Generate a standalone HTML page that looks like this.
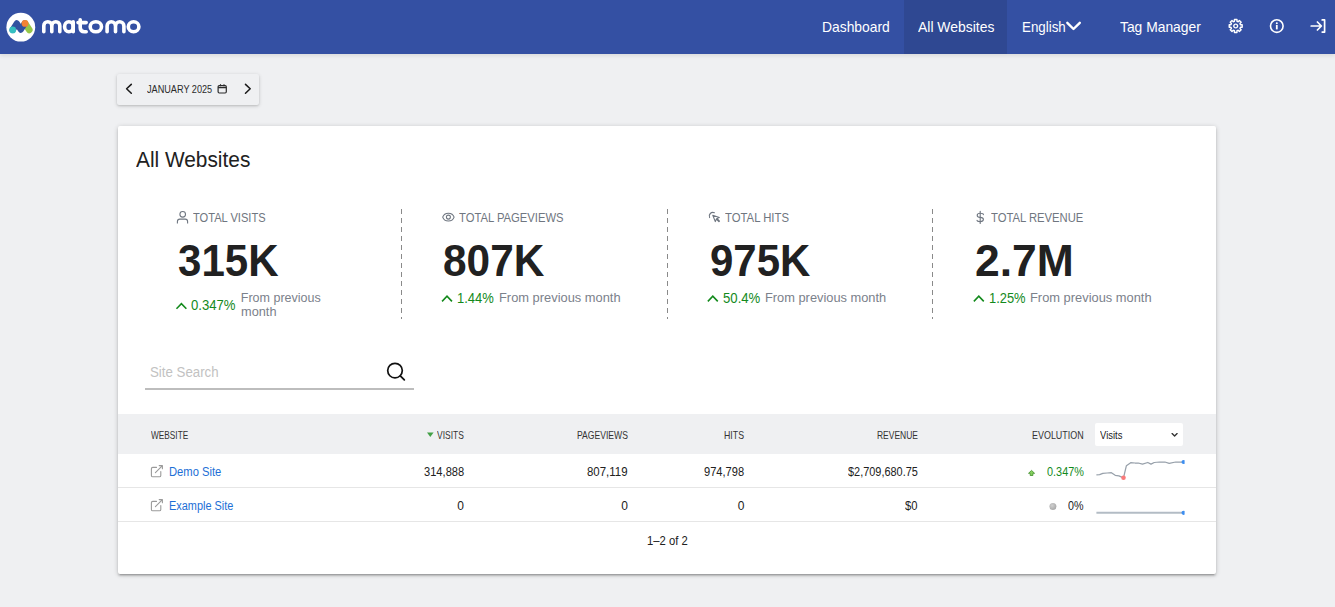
<!DOCTYPE html>
<html><head><meta charset="utf-8">
<style>
html,body{margin:0;padding:0;}
body{width:1335px;height:607px;overflow:hidden;position:relative;background:#eff0f2;font-family:"Liberation Sans",sans-serif;}
.t{position:absolute;white-space:nowrap;line-height:1;transform-origin:0 0;}
.abs{position:absolute;}
svg{position:absolute;overflow:visible;}
</style></head><body>
<!-- header -->
<div class="abs" style="left:0;top:0;width:1335px;height:54px;background:#3450a3;box-shadow:0 2px 4px 0 rgba(0,0,0,.09);"></div>
<div class="abs" style="left:904px;top:0;width:103px;height:54px;background:#2f4892;"></div>
<svg style="left:0;top:0" width="150" height="54" viewBox="0 0 150 54">
  <circle cx="20.8" cy="27.2" r="14.4" fill="#fff"/>
  <line x1="25.2" y1="23.6" x2="29.3" y2="29.9" stroke="#95c748" stroke-width="6.6" stroke-linecap="round"/>
  <polyline points="12.7,29.9 16.8,23.3 20.8,29.7 24.6,23.6" fill="none" stroke="#3152a0" stroke-width="6.2" stroke-linecap="round" stroke-linejoin="round"/>
  <circle cx="12.7" cy="29.9" r="3.4" fill="#35bfc0"/>
  <circle cx="25" cy="23.4" r="3.4" fill="#f38334"/>
  <g fill="none" stroke="#fff" stroke-width="3.6" stroke-linecap="round" stroke-linejoin="round">
    <path d="M43.8,31.8 V25.7 A4.0,4.0 0 0 1 51.8,25.7 V31.8 M51.8,25.7 A4.0,4.0 0 0 1 59.8,25.7 V31.8"/>
    <ellipse cx="68.9" cy="26.75" rx="4.3" ry="5.05"/>
    <path d="M73.2,21.7 V31.8"/>
    <path d="M80.2,19.7 V27.6 Q80.2,31.8 84.4,31.8 H86.2 M78.0,22.6 H86.2"/>
    <ellipse cx="95.85" cy="26.75" rx="5.65" ry="5.05"/>
    <path d="M107.1,31.8 V25.9 A4.2,4.2 0 0 1 115.5,25.9 V31.8 M115.5,25.9 A4.2,4.2 0 0 1 123.9,25.9 V31.8"/>
    <ellipse cx="133.6" cy="26.75" rx="5.3" ry="5.05"/>
  </g>
</svg>
<!-- English chevron -->
<svg style="left:1064px;top:18px" width="20" height="16" viewBox="1064 18 20 16">
  <polyline points="1067.3,22.8 1073.5,29 1079.8,22.8" fill="none" stroke="#fff" stroke-width="2.4" stroke-linecap="round" stroke-linejoin="round"/>
</svg>
<!-- gear -->
<svg style="left:1226px;top:17px" width="20" height="20" viewBox="1226 17 20 20">
  <g transform="translate(1235.7,26)" fill="none" stroke="#fff" stroke-width="1.4" stroke-linejoin="round">
    <path d="M4.53,-1.88 L4.73,-1.27 L6.48,-1.26 L6.48,1.26 L4.73,1.27 L4.53,1.88 L4.24,2.45 L5.47,3.69 L3.69,5.47 L2.45,4.24 L1.88,4.53 L1.27,4.73 L1.26,6.48 L-1.26,6.48 L-1.27,4.73 L-1.88,4.53 L-2.45,4.24 L-3.69,5.47 L-5.47,3.69 L-4.24,2.45 L-4.53,1.88 L-4.73,1.27 L-6.48,1.26 L-6.48,-1.26 L-4.73,-1.27 L-4.53,-1.88 L-4.24,-2.45 L-5.47,-3.69 L-3.69,-5.47 L-2.45,-4.24 L-1.88,-4.53 L-1.27,-4.73 L-1.26,-6.48 L1.26,-6.48 L1.27,-4.73 L1.88,-4.53 L2.45,-4.24 L3.69,-5.47 L5.47,-3.69 L4.24,-2.45 Z"/>
    <circle cx="0" cy="0" r="1.9"/>
  </g>
</svg>
<!-- info -->
<svg style="left:1266px;top:16px" width="22" height="22" viewBox="1266 16 22 22">
  <circle cx="1276.8" cy="26.1" r="6.3" fill="none" stroke="#fff" stroke-width="1.6"/>
  <circle cx="1276.8" cy="23.2" r="1.0" fill="#fff"/>
  <line x1="1276.8" y1="25" x2="1276.8" y2="29.4" stroke="#fff" stroke-width="1.8"/>
</svg>
<!-- logout -->
<svg style="left:1308px;top:16px" width="22" height="22" viewBox="1308 16 22 22">
  <g fill="none" stroke="#fff" stroke-width="1.7" stroke-linecap="round" stroke-linejoin="round">
    <path d="M1311.2,26 H1321.2 M1317.4,22 L1321.4,26 L1317.4,30"/>
    <path d="M1322.2,19.9 H1324.6 V32.1 H1322.2"/>
  </g>
</svg>
<!-- date selector -->
<div class="abs" style="left:117px;top:74px;width:142px;height:31px;background:#eff0f2;border-radius:2px;box-shadow:0 1px 2px 0 rgba(0,0,0,.12),0 1px 4px 0 rgba(0,0,0,.14);"></div>
<svg style="left:117px;top:74px" width="142" height="31" viewBox="117 74 142 31">
  <polyline points="131.3,84.4 126.6,88.8 131.3,93.2" fill="none" stroke="#1b1b1b" stroke-width="1.55" stroke-linecap="round" stroke-linejoin="round"/>
  <polyline points="245.5,84.4 250.2,88.8 245.5,93.2" fill="none" stroke="#1b1b1b" stroke-width="1.55" stroke-linecap="round" stroke-linejoin="round"/>
  <rect x="218.1" y="85.6" width="8.2" height="7.4" rx="1.2" fill="none" stroke="#2b2b2b" stroke-width="1.2"/>
  <line x1="218.1" y1="87.6" x2="226.3" y2="87.6" stroke="#2b2b2b" stroke-width="1.3"/>
  <line x1="220.5" y1="84.2" x2="220.5" y2="86.2" stroke="#2b2b2b" stroke-width="1.1"/>
  <line x1="224" y1="84.2" x2="224" y2="86.2" stroke="#2b2b2b" stroke-width="1.1"/>
</svg>
<!-- card -->
<div class="abs" style="left:118px;top:126px;width:1098px;height:448px;background:#fff;border-radius:2px;box-shadow:0 2px 2px 0 rgba(0,0,0,.14),0 3px 1px -2px rgba(0,0,0,.12),0 1px 5px 0 rgba(0,0,0,.2);"></div>
<!-- kpi dividers -->
<div class="abs" style="left:401px;top:209px;width:1px;height:110px;background:repeating-linear-gradient(to bottom,#8a8a8a 0,#8a8a8a 5px,transparent 5px,transparent 9px);"></div>
<div class="abs" style="left:667px;top:209px;width:1px;height:110px;background:repeating-linear-gradient(to bottom,#8a8a8a 0,#8a8a8a 5px,transparent 5px,transparent 9px);"></div>
<div class="abs" style="left:932px;top:209px;width:1px;height:110px;background:repeating-linear-gradient(to bottom,#8a8a8a 0,#8a8a8a 5px,transparent 5px,transparent 9px);"></div>
<!-- kpi icons -->
<svg style="left:170px;top:205px" width="30" height="24" viewBox="170 205 30 24">
  <g fill="none" stroke="#6f7680" stroke-width="1.1">
    <circle cx="182.7" cy="214.3" r="2.8"/>
    <path d="M177.4,223.6 V221.5 Q177.4,219.1 179.8,219.1 H185.3 Q187.6,219.1 187.6,221.5 V223.6"/>
  </g>
</svg>
<svg style="left:438px;top:205px" width="24" height="24" viewBox="438 205 24 24">
  <g fill="none" stroke="#6f7680" stroke-width="1.1">
    <path d="M442.7,217.1 C444.4,211.9 452.4,211.9 454.1,217.1 C452.4,222.3 444.4,222.3 442.7,217.1 Z"/>
    <circle cx="448.4" cy="217.1" r="2.0"/>
  </g>
</svg>
<svg style="left:704px;top:205px" width="24" height="24" viewBox="704 205 24 24">
  <g fill="none" stroke="#6f7680" stroke-width="1.1" stroke-linejoin="round" stroke-linecap="round">
    <path d="M712.8,215.2 L715.3,221.6 L716.3,219.1 L718.9,221.7 L719.5,221.1 L716.9,218.5 L719.3,217.5 Z"/>
    <path d="M709.6,217.6 A3.6,3.6 0 0 1 714.4,212.8"/>
  </g>
</svg>
<svg style="left:972px;top:205px" width="18" height="24" viewBox="972 205 18 24">
  <g fill="none" stroke="#6f7680" stroke-width="1.1" stroke-linecap="round">
    <path d="M983.4,214.6 Q983.4,213.3 980.2,213.3 Q977.2,213.3 977.2,215.3 Q977.2,217.4 980.2,217.4 Q983.4,217.4 983.4,219.6 Q983.4,221.6 980.2,221.6 Q977,221.6 977,220.3"/>
    <path d="M980.2,211.4 V223.4"/>
  </g>
</svg>
<!-- green chevrons -->
<svg style="left:170px;top:290px" width="830" height="30" viewBox="170 290 830 30">
  <g fill="none" stroke="#138a1c" stroke-width="1.6" stroke-linecap="square" stroke-linejoin="miter">
    <polyline points="177,308.2 181.4,303.6 185.8,308.2"/>
    <polyline points="442.6,300.8 447,296.2 451.4,300.8"/>
    <polyline points="708.4,300.8 712.8,296.2 717.2,300.8"/>
    <polyline points="974.4,300.8 978.8,296.2 983.2,300.8"/>
  </g>
</svg>
<!-- search -->
<div class="abs" style="left:145px;top:388px;width:269px;height:1.5px;background:#bdbdbd;"></div>
<svg style="left:380px;top:358px" width="30" height="28" viewBox="380 358 30 28">
  <circle cx="395" cy="370.6" r="7.3" fill="none" stroke="#111" stroke-width="1.7"/>
  <line x1="400.3" y1="375.9" x2="404.3" y2="379.9" stroke="#111" stroke-width="1.8" stroke-linecap="round"/>
</svg>
<!-- table -->
<div class="abs" style="left:118px;top:414px;width:1098px;height:40px;background:#eff0f2;"></div>
<div class="abs" style="left:118px;top:487px;width:1098px;height:1px;background:#e6e6e6;"></div>
<div class="abs" style="left:118px;top:521px;width:1098px;height:1px;background:#e6e6e6;"></div>
<svg style="left:420px;top:425px" width="20" height="20" viewBox="420 425 20 20">
  <polygon points="427,432.4 433.6,432.4 430.3,436.9" fill="#43a047"/>
</svg>
<div class="abs" style="left:1095px;top:422.6px;width:88px;height:23px;background:#fff;border-radius:2px;"></div>
<svg style="left:1165px;top:428px" width="18" height="14" viewBox="1165 428 18 14">
  <polyline points="1172.1,433.6 1174.6,436.1 1177.1,433.6" fill="none" stroke="#333" stroke-width="1.35" stroke-linecap="round" stroke-linejoin="round"/>
</svg>
<!-- ext link icons -->
<svg style="left:146px;top:460px" width="22" height="60" viewBox="146 460 22 60">
  <g fill="none" stroke="#9a9a9a" stroke-width="1.1" stroke-linecap="round" stroke-linejoin="round">
    <path d="M156.5,467.4 H152.8 Q151.4,467.4 151.4,468.8 V475.4 Q151.4,476.8 152.8,476.8 H159.4 Q160.8,476.8 160.8,475.4 V471.6"/>
    <path d="M155.4,472.6 L162.4,465.6 M159.2,465.6 H162.4 V468.8"/>
    <path d="M156.5,501.4 H152.8 Q151.4,501.4 151.4,502.8 V509.4 Q151.4,510.8 152.8,510.8 H159.4 Q160.8,510.8 160.8,509.4 V505.6"/>
    <path d="M155.4,506.6 L162.4,499.6 M159.2,499.6 H162.4 V502.8"/>
  </g>
</svg>
<!-- evolution icons -->
<svg style="left:1020px;top:460px" width="170" height="60" viewBox="1020 460 170 60">
  <polygon points="1031.55,470.4 1034.6,473.3 1032.9,473.3 1032.9,475.5 1030.2,475.5 1030.2,473.3 1028.5,473.3" fill="#86cf5e" stroke="#3f8f2a" stroke-width="0.8" stroke-linejoin="round"/>
  <defs><clipPath id="spc"><rect x="1090" y="455" width="94.6" height="70"/></clipPath><radialGradient id="gd" cx="0.4" cy="0.35" r="0.7"><stop offset="0" stop-color="#d0d0d0"/><stop offset="1" stop-color="#a5a5a5"/></radialGradient></defs>
  <circle cx="1052.9" cy="506.6" r="3.5" fill="url(#gd)"/>
  <polyline points="1096.4,474.8 1099.6,474.6 1102.8,473.4 1107.1,473 1111.4,472.7 1115.2,475.3 1118.9,475.9 1123.5,477.8 1126.4,465.7 1130.7,462.7 1135,463 1138.2,463 1142.5,464.1 1147.8,462.5 1151,464.1 1154.2,462.5 1159.6,462 1164.9,462 1169.2,463.4 1175.7,462 1183.1,462" fill="none" stroke="#97a0aa" stroke-width="1.25" stroke-linejoin="round"/>
  <circle cx="1123.5" cy="477.8" r="2.3" fill="#fa7a7a"/>
  <circle cx="1183.6" cy="462" r="2.1" fill="#3d8ef0" clip-path="url(#spc)"/>
  <line x1="1096.4" y1="512.8" x2="1183.1" y2="512.8" stroke="#b3bcc5" stroke-width="2"/>
  <circle cx="1183.6" cy="512.8" r="2.1" fill="#3d8ef0" clip-path="url(#spc)"/>
</svg>
<div class="t" style="left:822.30px;top:20.02px;font-size:14.5px;color:#ffffff;transform:scaleX(0.9558);">Dashboard</div>
<div class="t" style="left:917.60px;top:20.02px;font-size:14.5px;color:#ffffff;transform:scaleX(0.9609);">All Websites</div>
<div class="t" style="left:1021.70px;top:20.02px;font-size:14.5px;color:#ffffff;transform:scaleX(0.9209);">English</div>
<div class="t" style="left:1120.30px;top:20.02px;font-size:14.5px;color:#ffffff;transform:scaleX(0.9547);">Tag Manager</div>
<div class="t" style="left:146.80px;top:84.53px;font-size:10px;color:#2b2b2b;transform:scaleX(0.9139);">JANUARY 2025</div>
<div class="t" style="left:136.30px;top:149.37px;font-size:22px;color:#212121;transform:scaleX(0.9475);">All Websites</div>
<div class="t" style="left:193.20px;top:212.04px;font-size:12px;color:#6f7680;transform:scaleX(0.9253);">TOTAL VISITS</div>
<div class="t" style="left:459.30px;top:212.04px;font-size:12px;color:#6f7680;transform:scaleX(0.9374);">TOTAL PAGEVIEWS</div>
<div class="t" style="left:725.00px;top:212.04px;font-size:12px;color:#6f7680;transform:scaleX(0.9441);">TOTAL HITS</div>
<div class="t" style="left:990.70px;top:212.04px;font-size:12px;color:#6f7680;transform:scaleX(0.9374);">TOTAL REVENUE</div>
<div class="t" style="left:178.30px;top:238.65px;font-size:44px;color:#212121;transform:scaleX(0.9555);font-weight:bold;">315K</div>
<div class="t" style="left:443.40px;top:238.65px;font-size:44px;color:#212121;transform:scaleX(0.9631);font-weight:bold;">807K</div>
<div class="t" style="left:709.80px;top:238.65px;font-size:44px;color:#212121;transform:scaleX(0.9536);font-weight:bold;">975K</div>
<div class="t" style="left:975.40px;top:238.65px;font-size:44px;color:#212121;transform:scaleX(1.0111);font-weight:bold;">2.7M</div>
<div class="t" style="left:190.70px;top:297.52px;font-size:14.5px;color:#138a1c;transform:scaleX(0.9049);">0.347%</div>
<div class="t" style="left:457.10px;top:290.72px;font-size:14.5px;color:#138a1c;transform:scaleX(0.8951);">1.44%</div>
<div class="t" style="left:722.60px;top:290.72px;font-size:14.5px;color:#138a1c;transform:scaleX(0.9072);">50.4%</div>
<div class="t" style="left:988.70px;top:290.72px;font-size:14.5px;color:#138a1c;transform:scaleX(0.8902);">1.25%</div>
<div class="t" style="left:240.80px;top:292.02px;font-size:12.5px;color:#7b818b;">From previous</div>
<div class="t" style="left:240.80px;top:306.02px;font-size:12.5px;color:#7b818b;transform:scaleX(1.0218);">month</div>
<div class="t" style="left:498.60px;top:292.22px;font-size:12.5px;color:#7b818b;transform:scaleX(1.0296);">From previous month</div>
<div class="t" style="left:764.60px;top:292.22px;font-size:12.5px;color:#7b818b;transform:scaleX(1.0262);">From previous month</div>
<div class="t" style="left:1030.20px;top:292.22px;font-size:12.5px;color:#7b818b;transform:scaleX(1.0296);">From previous month</div>
<div class="t" style="left:149.60px;top:365.35px;font-size:14px;color:#c2c2c2;transform:scaleX(0.9479);">Site Search</div>
<div class="t" style="left:150.60px;top:430.11px;font-size:10.5px;color:#333333;transform:scaleX(0.7872);">WEBSITE</div>
<div class="t" style="left:437.20px;top:430.11px;font-size:10.5px;color:#333333;transform:scaleX(0.8058);">VISITS</div>
<div class="t" style="left:576.90px;top:430.11px;font-size:10.5px;color:#333333;transform:scaleX(0.8178);">PAGEVIEWS</div>
<div class="t" style="left:724.30px;top:430.11px;font-size:10.5px;color:#333333;transform:scaleX(0.8362);">HITS</div>
<div class="t" style="left:876.50px;top:430.11px;font-size:10.5px;color:#333333;transform:scaleX(0.8077);">REVENUE</div>
<div class="t" style="left:1031.70px;top:430.11px;font-size:10.5px;color:#333333;transform:scaleX(0.8520);">EVOLUTION</div>
<div class="t" style="left:1099.90px;top:429.66px;font-size:11.5px;color:#212121;transform:scaleX(0.8215);">Visits</div>
<div class="t" style="left:169.30px;top:465.84px;font-size:12px;color:#1d6fd6;transform:scaleX(0.9336);">Demo Site</div>
<div class="t" style="left:169.30px;top:499.84px;font-size:12px;color:#1d6fd6;transform:scaleX(0.9095);">Example Site</div>
<div class="t" style="left:423.80px;top:465.84px;font-size:12px;color:#212121;transform:scaleX(0.9267);">314,888</div>
<div class="t" style="left:587.30px;top:465.84px;font-size:12px;color:#212121;transform:scaleX(0.9533);">807,119</div>
<div class="t" style="left:704.20px;top:465.84px;font-size:12px;color:#212121;transform:scaleX(0.9244);">974,798</div>
<div class="t" style="left:847.70px;top:465.84px;font-size:12px;color:#212121;transform:scaleX(0.9096);">$2,709,680.75</div>
<div class="t" style="left:1046.50px;top:465.84px;font-size:12px;color:#138a1c;transform:scaleX(0.9067);">0.347%</div>
<div class="t" style="left:457.33px;top:499.84px;font-size:12px;color:#212121;">0</div>
<div class="t" style="left:621.13px;top:499.84px;font-size:12px;color:#212121;">0</div>
<div class="t" style="left:737.63px;top:499.84px;font-size:12px;color:#212121;">0</div>
<div class="t" style="left:905.00px;top:499.84px;font-size:12px;color:#212121;transform:scaleX(0.9363);">$0</div>
<div class="t" style="left:1067.90px;top:499.84px;font-size:12px;color:#212121;transform:scaleX(0.8936);">0%</div>
<div class="t" style="left:647.00px;top:535.14px;font-size:12px;color:#212121;transform:scaleX(0.9384);">1–2 of 2</div>
</body></html>
